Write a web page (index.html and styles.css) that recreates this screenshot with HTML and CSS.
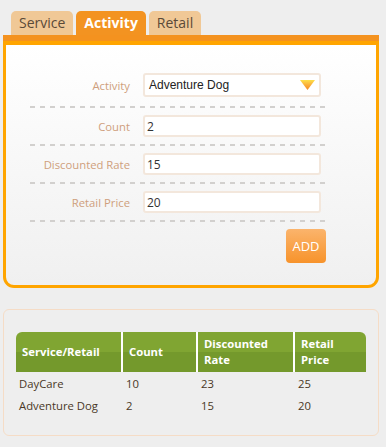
FILE: index.html
```html
<!DOCTYPE html>
<html lang="en">
<head>
    <meta charset="UTF-8">
    <meta name="viewport" content="width=device-width, initial-scale=1.0">
    <title>Activity</title>
    <link rel="stylesheet" href="styles.css">
</head>
<body>

    <div class="wrap">
        <div class="tabs">
            <div class="tab">Service</div>
            <div class="tab active">Activity</div>
            <div class="tab">Retail</div>
        </div>

        <div class="panel">
            <div class="form">
                <div class="row">
                    <label>Activity</label>
                    <div class="select">
                        <span>Adventure Dog</span>
                        <svg width="15" height="10" viewBox="0 0 15 10">
                            <defs>
                                <linearGradient id="arr" x1="0" y1="0" x2="0" y2="1">
                                    <stop offset="0" stop-color="#fde04a"/>
                                    <stop offset="0.5" stop-color="#fbae3a"/>
                                    <stop offset="1" stop-color="#f58a22"/>
                                </linearGradient>
                            </defs>
                            <polygon points="0,0 15,0 7.5,10" fill="url(#arr)"/>
                        </svg>
                    </div>
                </div>
                <div class="dash"></div>
                <div class="row">
                    <label>Count</label>
                    <input type="text" value="2">
                </div>
                <div class="dash"></div>
                <div class="row">
                    <label>Discounted Rate</label>
                    <input type="text" value="15">
                </div>
                <div class="dash"></div>
                <div class="row">
                    <label>Retail Price</label>
                    <input type="text" value="20">
                </div>
                <div class="dash"></div>
                <div class="actions">
                    <button class="btn-add">ADD</button>
                </div>
            </div>
        </div>

        <div class="results">
            <table>
                <thead>
                    <tr>
                        <th class="c1">Service/Retail</th>
                        <th class="c2">Count</th>
                        <th class="c3">Discounted Rate</th>
                        <th class="c4">Retail Price</th>
                    </tr>
                </thead>
                <tbody>
                    <tr>
                        <td>DayCare</td>
                        <td>10</td>
                        <td>23</td>
                        <td>25</td>
                    </tr>
                    <tr>
                        <td>Adventure Dog</td>
                        <td>2</td>
                        <td>15</td>
                        <td>20</td>
                    </tr>
                </tbody>
            </table>
        </div>
    </div>

</body>
</html>
```

FILE: styles.css
```css
body {
    margin: 0;
    background-color: #eeeeee;
    font-family: "Open Sans", "Noto Sans", sans-serif;
}
.wrap {
    width: 376px;
    padding: 11px 0 0 3px;
}
.tabs {
    display: flex;
    gap: 3px;
    padding-left: 8px;
    border-bottom: 6px solid #f4921f;
}
.tab {
    height: 24px;
    line-height: 24px;
    padding: 0 8px;
    font-size: 14px;
    color: #5b4a38;
    background: #f0c896;
    border-radius: 5px 5px 0 0;
}
.tab.active {
    color: white;
    font-weight: bold;
    background: #f39321;
}
.panel {
    border: 3px solid #ffa500;
    border-top-width: 4px;
    border-radius: 0 0 11px 11px;
    background: linear-gradient(#ffffff, #f0f0f0);
    padding: 28px 0 22px 24px;
}
.form {
    width: 300px;
}
.row {
    display: flex;
    align-items: center;
    padding: 7px 0;
}
.row:first-child {
    padding-top: 0;
    padding-bottom: 9px;
}
.row label {
    width: 100px;
    margin-right: 13px;
    text-align: right;
    font-size: 11.3px;
    color: #cf9f7d;
}
.row input,
.select {
    box-sizing: border-box;
    width: 178px;
    height: 22px;
    border: 2px solid #f3e7dc;
    border-radius: 3px;
    background: white;
    padding: 0 2px;
    font-family: "Open Sans", sans-serif;
    font-size: 12px;
    color: #333;
    outline: none;
}
.select {
    height: 24px;
    display: flex;
    align-items: center;
    justify-content: space-between;
    padding: 0 4px 0 4px;
    font-family: "Liberation Sans", Arial, sans-serif;
    font-size: 12px;
    color: #222;
}
.dash {
    height: 2px;
    background: repeating-linear-gradient(to right, #d2d0ce 0 5px, transparent 5px 10px);
}
.actions {
    display: flex;
    justify-content: flex-end;
    padding: 7px 4px 0 0;
}
.btn-add {
    width: 40px;
    height: 34px;
    border: none;
    border-radius: 4px;
    background: linear-gradient(#fbb46c, #f7932b);
    color: white;
    font-family: "Open Sans", sans-serif;
    font-size: 13px;
    padding: 0;
}
.results {
    margin-top: 21px;
    border: 1px solid #f5dcc6;
    border-radius: 6px;
    padding: 22px 12px 19px 12px;
}
table {
    width: 350px;
    border-collapse: separate;
    border-spacing: 0;
    font-size: 11.3px;
}
th {
    height: 40px;
    box-sizing: border-box;
    text-align: left;
    vertical-align: middle;
    padding: 0 6px;
    color: white;
    font-weight: bold;
    line-height: 16px;
    background: linear-gradient(#80a532 50%, #74992c 50%);
    border-right: 2px solid white;
}
th.c1 { width: 107px; border-radius: 6px 0 0 0; }
th.c2 { width: 75px; }
th.c3 { width: 97px; }
th.c4 { width: 71px; border-right: none; border-radius: 0 6px 0 0; }
td {
    height: 22px;
    padding: 0 3px;
    color: #4a3826;
    vertical-align: middle;
}
```
